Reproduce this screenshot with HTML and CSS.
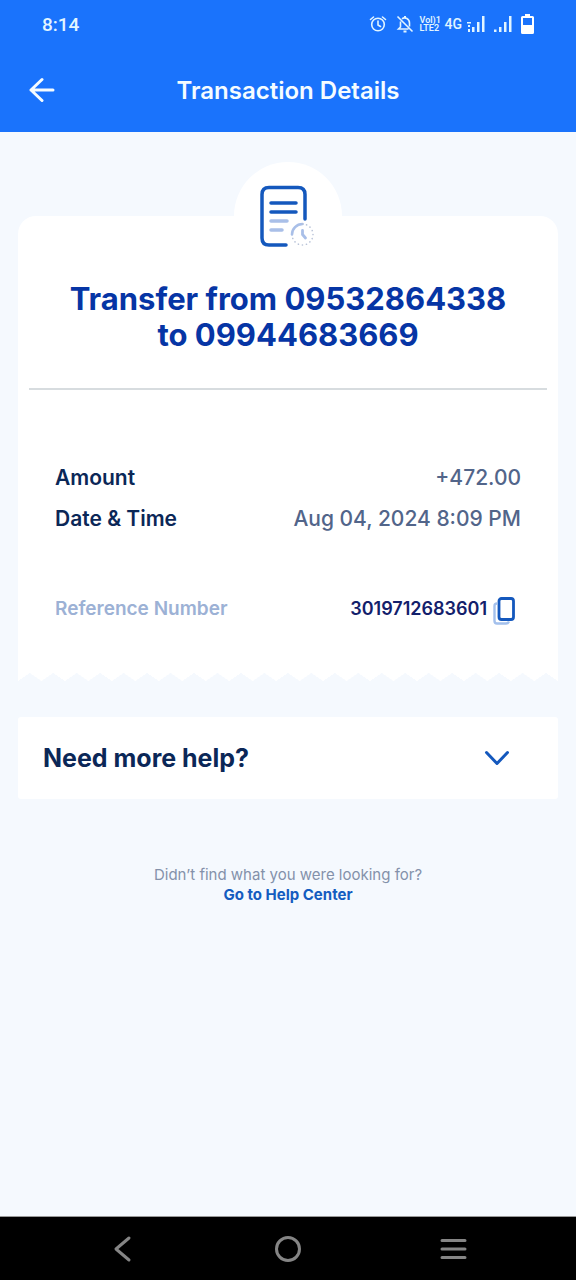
FILE: index.html
```html
<!DOCTYPE html>
<html lang="en">
<head>
<meta charset="utf-8">
<meta name="viewport" content="width=device-width, initial-scale=1">
<title>Transaction Details</title>
<link rel="stylesheet" href="styles.css">
</head>
<body>
<div class="screen">
  <div class="status">
    <span class="clock">8:14</span>
    <div class="indicators">
      <svg width="18" height="18" viewBox="0 0 18 18" fill="none" stroke="currentColor" stroke-width="1.6" stroke-linecap="round" aria-hidden="true"><circle cx="9" cy="9.5" r="6.3"/><path d="M9 6v4l2.5 1.5M1.5 4.5 4.5 2M16.5 4.5 13.5 2"/></svg>
      <svg width="18" height="18" viewBox="0 0 18 18" fill="none" stroke="currentColor" stroke-width="1.6" aria-hidden="true"><path d="M1.5 1.5 16.5 16.5M6 3.8C9 1.5 13.5 4 13.5 8v3.5M4.5 6.5V12L2.5 14H12.5"/><path d="M7.5 16.5h3M9 1v2" stroke-width="2"/></svg>
      <span class="volte"><span>Vol)1</span><span>LTE2</span></span>
      <span class="network">4G</span>
      <svg width="18" height="18" viewBox="0 0 18 18" fill="currentColor" aria-hidden="true"><path d="M0 7h4v1.5H0zM1 10h2v2H1zM1 14h2v3H1zM5 12h2.5v5H5zM10 7h2.5v10H10zM15 1h2.5v16H15z"/></svg>
      <svg width="18" height="18" viewBox="0 0 18 18" fill="currentColor" aria-hidden="true"><path d="M0 14.5h2.5V17H0zM5 12h2.5v5H5zM10 7h2.5v10H10zM15 1h2.5v16H15z"/></svg>
      <svg class="battery" width="13" height="20" viewBox="0 0 13 20" aria-hidden="true"><path d="M4 0h5v2h2.5q1.5 0 1.5 1.5v15q0 1.5-1.5 1.5h-10Q0 20 0 18.5v-15Q0 2 1.5 2H4zM2 4v7h9V4z" fill="currentColor" fill-rule="evenodd"/></svg>
    </div>
  </div>
  <header class="header">
    <button class="back" type="button" aria-label="Back"><svg width="26" height="26" viewBox="0 0 26 26" fill="none" stroke="currentColor" stroke-width="3" stroke-linecap="round" stroke-linejoin="round"><path d="M24 13H2M13 2.5 2 13l11 10.5"/></svg></button>
    <h1 class="title">Transaction Details</h1>
  </header>
  <main class="content">
    <section class="receipt">
      <div class="emblem">
        <svg width="60" height="64" viewBox="0 0 60 64" fill="none" stroke-linecap="round" aria-hidden="true">
          <g stroke="#1458bd" stroke-width="3.5"><path d="M28 60H11q-7 0-7-7V9.5q0-7 7-7h29q7 0 7 7V34"/><path d="M13 18h25M13 27h25"/></g>
          <path d="M13 36h16M13 45h11" stroke="#a9bfe8" stroke-width="3.5"/>
          <path d="M34 49.5a10.5 10.5 0 0 1 10.5-10.5" stroke="#a9bfe8" stroke-width="2.6"/>
          <path d="M44.5 39A10.5 10.5 0 1 1 34 49.5" stroke="#b9c3d8" stroke-width="1.6" stroke-dasharray="0.1 4"/>
          <path d="M44.5 45.5v4l3 3.5" stroke="#a9bfe8" stroke-width="2.8" stroke-linejoin="round"/>
        </svg>
      </div>
      <div class="paper">
        <h2 class="summary">Transfer from 09532864338<br>to 09944683669</h2>
        <dl class="details">
          <div class="row"><dt>Amount</dt><dd>+472.00</dd></div>
          <div class="row"><dt>Date &amp; Time</dt><dd>Aug 04, 2024 8:09 PM</dd></div>
        </dl>
        <div class="reference">
          <span class="ref-label">Reference Number</span>
          <span class="ref-value">3019712683601</span>
          <button class="copy" type="button" aria-label="Copy reference number"><svg width="22" height="28" viewBox="0 0 22 28" fill="none"><path d="M4 6.5q-2.5 0-2.5 2.5v15q0 2.5 2.5 2.5h9q2 0 3-2" stroke="#a3c0ec" stroke-width="2.4"/><rect x="6" y="1.5" width="14.5" height="21" rx="2.5" fill="#fff" stroke="#1458bd" stroke-width="2.8"/></svg></button>
        </div>
      </div>
      <div class="torn-edge"></div>
    </section>
    <button class="more" type="button" aria-expanded="false">
      <span>Need more help?</span>
      <svg width="26" height="16" viewBox="0 0 26 16" fill="none" stroke="#1458bd" stroke-width="3" stroke-linecap="round" stroke-linejoin="round" aria-hidden="true"><path d="M2.5 2.5 13 13.5 23.5 2.5"/></svg>
    </button>
    <div class="support">
      <p>Didn’t find what you were looking for?</p>
      <a href="#">Go to Help Center</a>
    </div>
  </main>
  <nav class="system-nav" aria-label="System navigation">
    <button type="button" aria-label="Back"><svg width="28" height="28" viewBox="0 0 28 28"><path d="M20 3 7 14l13 11"/></svg></button>
    <button type="button" aria-label="Home"><svg width="28" height="28" viewBox="0 0 28 28"><circle cx="14" cy="14" r="11.5"/></svg></button>
    <button type="button" aria-label="Recent apps"><svg width="28" height="28" viewBox="0 0 28 28"><path d="M3 5.5h23M3 14h23M3 22.5h23"/></svg></button>
  </nav>
</div>
</body>
</html>
```
FILE: styles.css
```css
* {
  box-sizing: border-box;
}

body {
  margin: 0;
  background: #f5f9fe;
  color: #0b2757;
  font-family: Inter, "Open Sans", sans-serif;
}

h1, h2, p, dl, dd {
  margin: 0;
}

button {
  display: flex;
  align-items: center;
  padding: 0;
  border: 0;
  background: none;
  color: inherit;
  font: inherit;
  cursor: pointer;
}

.screen {
  display: flex;
  flex-direction: column;
  min-height: 100vh;
}

.status {
  display: flex;
  align-items: center;
  justify-content: space-between;
  height: 48px;
  padding: 0 42px;
  background: #1a73fc;
  color: #e2f5ff;
  font-family: Roboto, sans-serif;
}

.clock {
  font-size: 19px;
  font-weight: 500;
}

.indicators {
  display: flex;
  align-items: center;
  gap: 9px;
}

.volte {
  display: flex;
  flex-direction: column;
  width: 20px;
  margin-left: -3px;
  font-size: 9px;
  font-weight: 600;
  line-height: 8px;
}

.network {
  margin: 0 -4px;
  font-size: 14px;
  font-weight: 500;
}

.battery {
  color: #fff;
}

.header {
  display: grid;
  grid-template-columns: 28px 1fr 28px;
  align-items: center;
  height: 84px;
  padding: 0 29px;
  background: #1a73fc;
  color: #f5fcff;
}

.title {
  font-size: 24px;
  font-weight: 600;
  text-align: center;
}

.content {
  flex: 1;
  padding: 30px 18px;
}

.receipt {
  display: flex;
  flex-direction: column;
}

.emblem {
  display: flex;
  justify-content: center;
  align-self: center;
  width: 108px;
  height: 108px;
  margin-bottom: -54px;
  padding-top: 23px;
  border-radius: 50%;
  background: #fff;
  z-index: 1;
}

.paper {
  padding: 65px 11px 48px;
  border-radius: 18px 18px 0 0;
  background: #fff;
}

.summary {
  padding-bottom: 35px;
  border-bottom: 2px solid #d7dcdf;
  color: #0635a5;
  font-size: 31px;
  font-weight: 700;
  line-height: 36px;
  text-align: center;
}

.details {
  padding: 67px 26px 0;
  font-size: 21px;
  line-height: 41px;
}

.row {
  display: flex;
  justify-content: space-between;
}

.row dt {
  font-weight: 600;
}

.row dd {
  color: #52658a;
  font-weight: 500;
}

.reference {
  display: flex;
  align-items: center;
  padding: 54px 32px 0 26px;
  line-height: 28px;
}

.ref-label {
  margin-right: auto;
  color: #9cb1d5;
  font-size: 19px;
  font-weight: 600;
}

.ref-value {
  margin-right: 6px;
  color: #13206b;
  font-size: 18px;
  font-weight: 600;
}

.copy {
  padding-top: 4px;
}

.torn-edge {
  height: 8px;
  background: conic-gradient(from 124deg at 50% 0, transparent 112deg, #fff 0) 0 0 / 24px 8px round;
}

.more {
  justify-content: space-between;
  width: 100%;
  height: 82px;
  margin-top: 36px;
  padding: 0 48px 0 25px;
  border-radius: 3px;
  background: #fff;
  font-size: 25px;
  font-weight: 700;
}

.support {
  margin-top: 66px;
  color: #8491aa;
  font-size: 15px;
  line-height: 20px;
  text-align: center;
}

.support a {
  color: #145cc0;
  font-weight: 700;
  text-decoration: none;
}

.system-nav {
  display: flex;
  align-items: center;
  justify-content: space-around;
  height: 64px;
  padding: 0 40px;
  border-top: 1px solid #999;
  background: #000;
}

.system-nav svg {
  fill: none;
  stroke: #858585;
  stroke-width: 3;
  stroke-linecap: round;
  stroke-linejoin: round;
}
```
